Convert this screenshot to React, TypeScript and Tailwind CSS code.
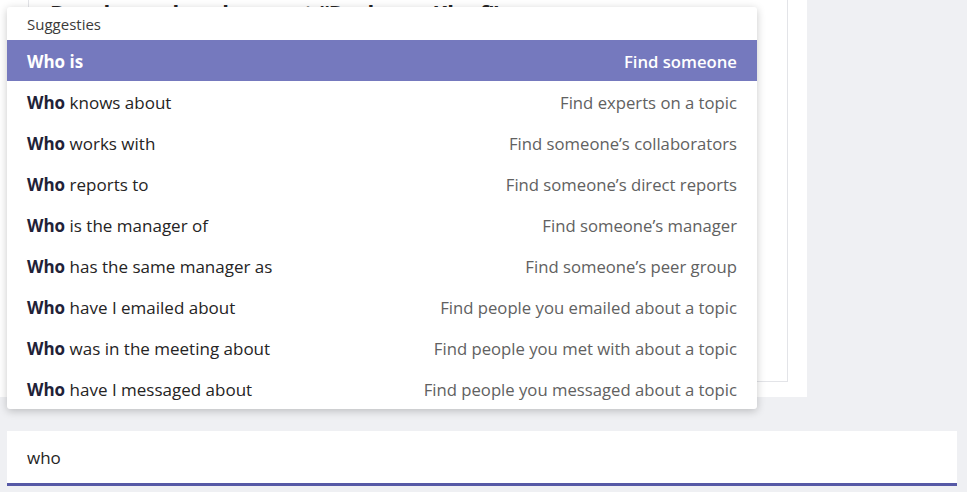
import React from "react";

const rows: [string, string][] = [
  ["is", "Find someone"],
  ["knows about", "Find experts on a topic"],
  ["works with", "Find someone’s collaborators"],
  ["reports to", "Find someone’s direct reports"],
  ["is the manager of", "Find someone’s manager"],
  ["has the same manager as", "Find someone’s peer group"],
  ["have I emailed about", "Find people you emailed about a topic"],
  ["was in the meeting about", "Find people you met with about a topic"],
  ["have I messaged about", "Find people you messaged about a topic"],
];

export default function App() {
  return (
    <div
      className="relative w-[967px] h-[492px] overflow-hidden bg-[#eff0f3]"
      style={{ fontFamily: '"Open Sans", "Noto Sans", sans-serif' }}
    >
      <div className="flex flex-col h-full">
        <div className="w-[807px] h-[397px] bg-white pl-[28px] pr-[19px] pb-[15px] shrink-0 flex">
          <div className="flex-1 border border-t-0 border-[#e3e4e8] overflow-hidden">
            <div className="-mt-[2px] pl-[21px] text-[22px] font-bold text-[#252424] leading-[28px] whitespace-nowrap">
              Doorlopend zoeken met “Rasberry Kleef”
            </div>
          </div>
        </div>
        <div className="mt-[34px] mx-[7px] mr-[10px] h-[55px] bg-white border-b-[3px] border-[#5659a6] flex items-center pl-[20px] pt-[1px]">
          <span className="text-[17px] text-[#252424]">who</span>
        </div>
      </div>

      <div className="absolute left-[7px] top-[7px] w-[750px] bg-white rounded-[3px] shadow-[0_2px_8px_rgba(0,0,0,0.22)] overflow-hidden">
        <div className="h-[33px] flex items-center pl-[20px] pt-[1px] text-[15px] text-[#3b3a39]">
          Suggesties
        </div>
        {rows.map(([rest, desc], i) => {
          const active = i === 0;
          return (
            <div
              key={i}
              className={
                active
                  ? "h-[41px] flex items-center justify-between px-[20px] pt-[2px] bg-[#7579be] text-white text-[17px]"
                  : "h-[41px] flex items-center justify-between px-[20px] pt-[2px] text-[17px]"
              }
            >
              <span className={active ? "font-bold text-white" : "text-[#252424]"}>
                <span className={active ? "font-bold" : "font-bold text-[#1f2238]"}>Who</span>{" "}
                {rest}
              </span>
              <span
                className={
                  active ? "font-semibold text-white text-[16.7px]" : "text-[#616161] text-[16.7px]"
                }
              >
                {desc}
              </span>
            </div>
          );
        })}
      </div>
    </div>
  );
}
